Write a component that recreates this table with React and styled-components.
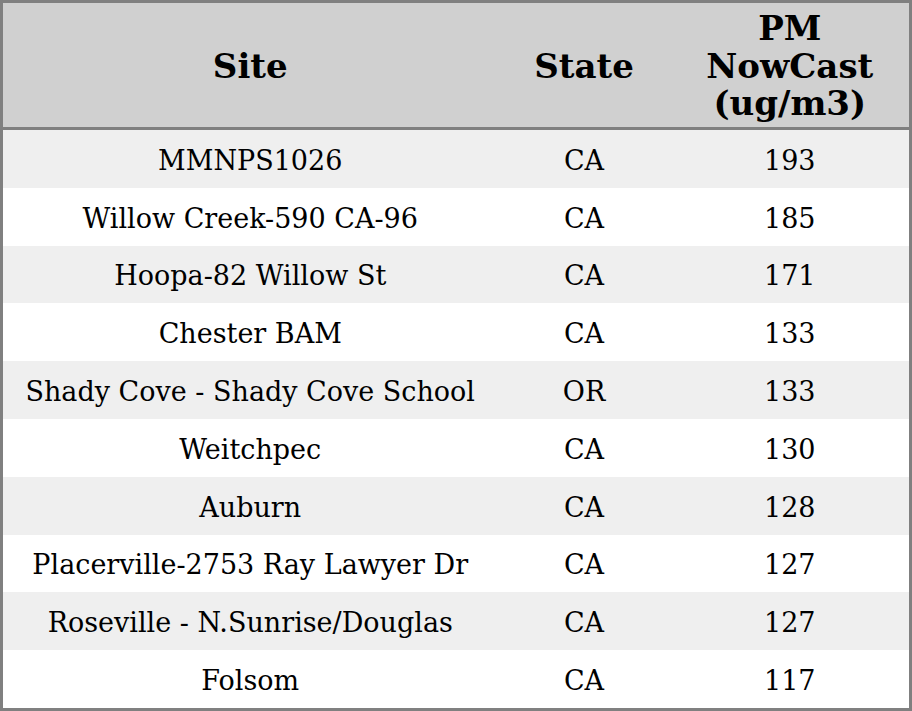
import React from "react";
import styled, { createGlobalStyle } from "styled-components";

const GlobalStyle = createGlobalStyle`
  html, body {
    margin: 0;
    padding: 0;
    background: #ffffff;
  }
`;

const Table = styled.table`
  width: 912px;
  height: 711px;
  border-collapse: collapse;
  border: 3px solid #808080;
  font-family: "DejaVu Serif", serif;
  color: #000;
  table-layout: fixed;
`;

const HeadCell = styled.th`
  box-sizing: border-box;
  background: #d0d0d0;
  border-bottom: 3px solid #808080;
  font-size: 34px;
  font-weight: bold;
  text-align: center;
  padding: 3px 6px 0;
  height: 127px;
  width: ${p => p.$w}px;
  line-height: 37.5px;
`;

const Row = styled.tr`
  background: ${p => (p.$odd ? "#efefef" : "#ffffff")};
`;

const Cell = styled.td`
  font-size: 27px;
  text-align: center;
  padding: 3px 6px 0;
  height: 54px;
  white-space: nowrap;
`;

const rows = [
  ["MMNPS1026", "CA", 193],
  ["Willow Creek-590 CA-96", "CA", 185],
  ["Hoopa-82 Willow St", "CA", 171],
  ["Chester BAM", "CA", 133],
  ["Shady Cove - Shady Cove School", "OR", 133],
  ["Weitchpec", "CA", 130],
  ["Auburn", "CA", 128],
  ["Placerville-2753 Ray Lawyer Dr", "CA", 127],
  ["Roseville - N.Sunrise/Douglas", "CA", 127],
  ["Folsom", "CA", 117],
];

export default function App() {
  return (
    <>
      <GlobalStyle />
      <Table>
        <thead>
          <tr>
            <HeadCell $w={496}>Site</HeadCell>
            <HeadCell $w={173}>State</HeadCell>
            <HeadCell $w={240}>PM<br />NowCast<br />(ug/m3)</HeadCell>
          </tr>
        </thead>
        <tbody>
          {rows.map((r, i) => (
            <Row key={i} $odd={i % 2 === 0}>
              <Cell>{r[0]}</Cell>
              <Cell>{r[1]}</Cell>
              <Cell>{r[2]}</Cell>
            </Row>
          ))}
        </tbody>
      </Table>
    </>
  );
}
